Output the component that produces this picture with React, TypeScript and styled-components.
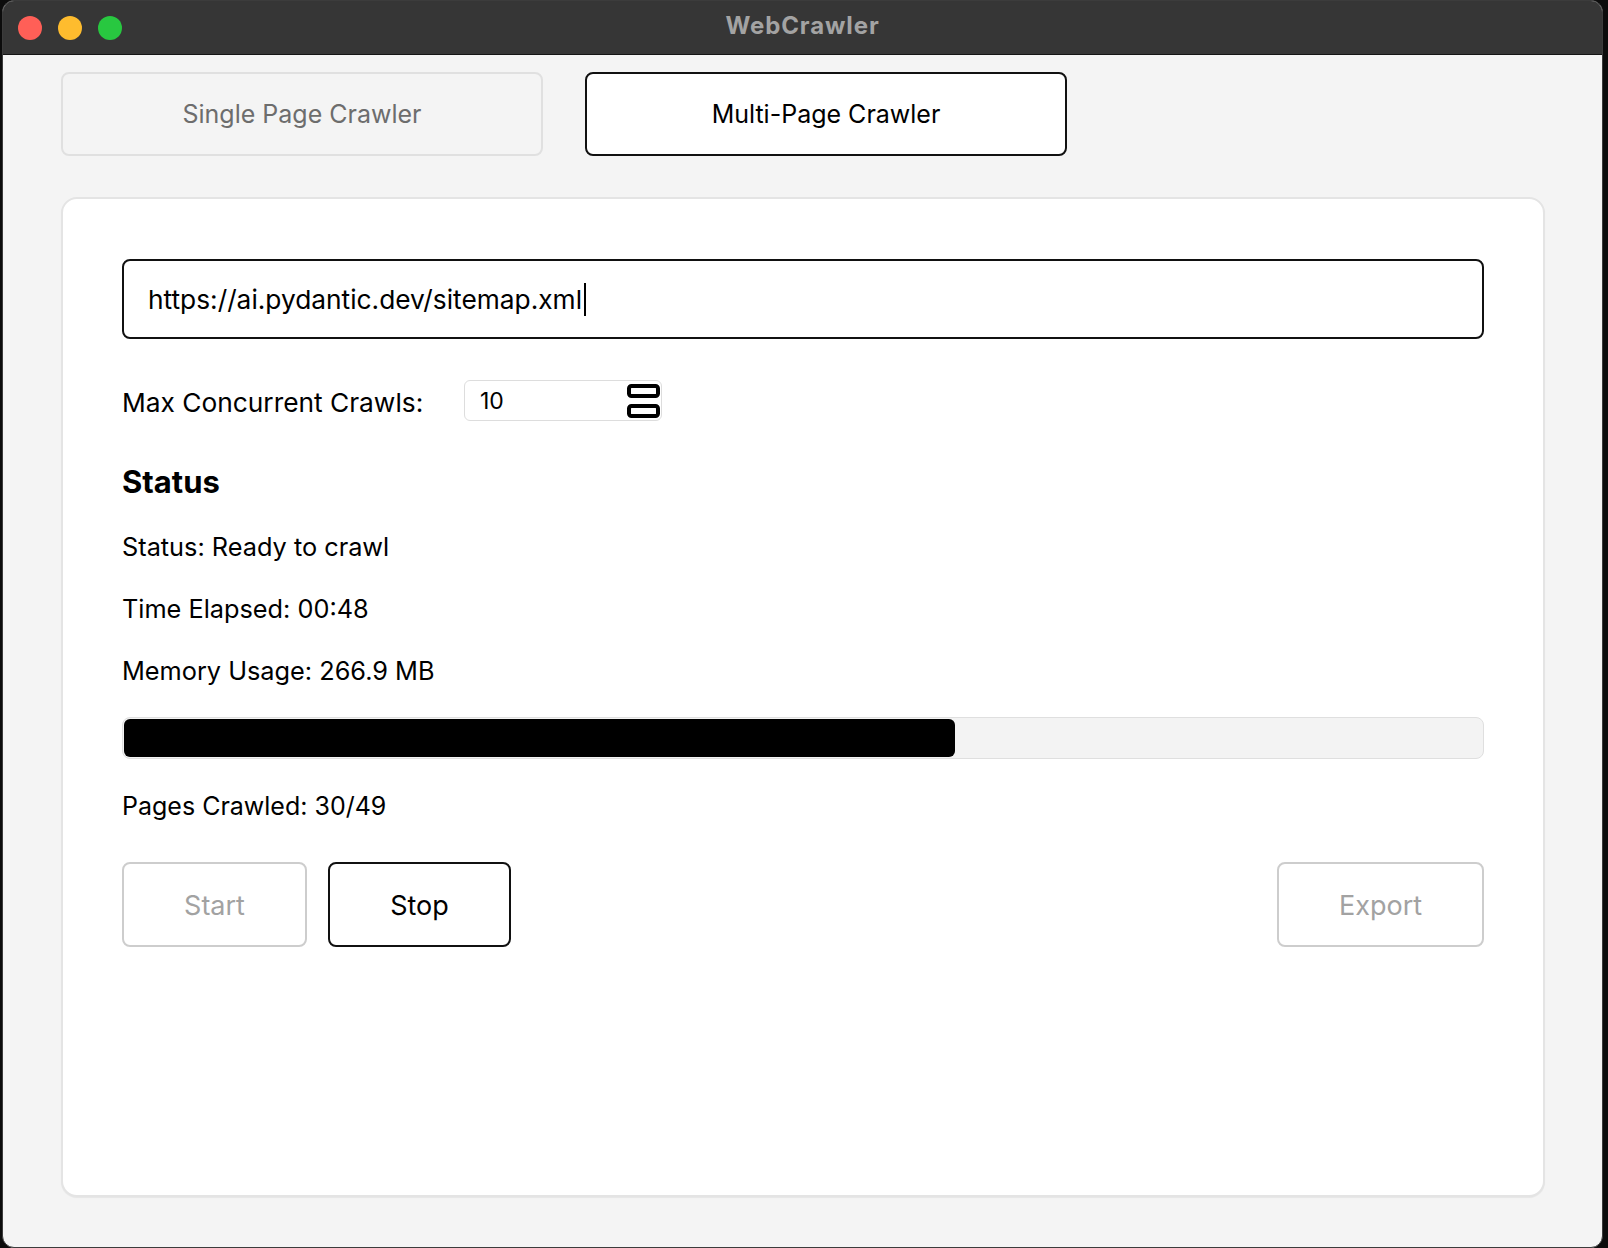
import styled, { createGlobalStyle } from 'styled-components';

const GlobalStyle = createGlobalStyle`
  html, body {
    margin: 0;
    padding: 0;
    background: #0c0c0c;
  }
  body {
    font-family: Inter, "Noto Sans", "Liberation Sans", sans-serif;
    color: #000;
  }
`;

const Window = styled.div`
  margin-left: 2px;
  width: 1601px;
  height: 1248px;
  box-sizing: border-box;
  background: #f4f4f4;
  border-radius: 12px;
  border: 1px solid #3c3c3c;
  overflow: hidden;
  display: flex;
  flex-direction: column;
`;

const TitleBar = styled.div`
  height: 53px;
  flex-shrink: 0;
  background: #363636;
  border-bottom: 1px solid #151515;
  display: grid;
  grid-template-columns: 1fr auto 1fr;
  align-items: center;
`;

const Lights = styled.div`
  display: flex;
  gap: 16px;
  padding-left: 15px;
`;

const Light = styled.span<{ $color: string }>`
  width: 24px;
  height: 24px;
  border-radius: 50%;
  background: ${(p) => p.$color};
`;

const Title = styled.div`
  font-size: 24px;
  font-weight: 700;
  color: #a3a3a3;
  letter-spacing: 0.9px;
  padding-bottom: 4px;
`;

const Content = styled.div`
  padding: 17px 0 0 58px;
  display: flex;
  flex-direction: column;
  gap: 41px;
`;

const Tabs = styled.div`
  display: flex;
  gap: 42px;
`;

const Tab = styled.div<{ $active?: boolean }>`
  width: 482px;
  height: 84px;
  box-sizing: border-box;
  border-radius: 8px;
  border: 2px solid ${(p) => (p.$active ? '#111' : '#e0e0e0')};
  background: ${(p) => (p.$active ? '#fff' : '#f4f4f4')};
  color: ${(p) => (p.$active ? '#000' : '#6d6d6d')};
  font-size: 25px;
  display: flex;
  align-items: center;
  justify-content: center;
`;

const Panel = styled.div`
  width: 1484px;
  height: 1000px;
  box-sizing: border-box;
  background: #fff;
  border: 2px solid #e4e4e4;
  border-radius: 16px;
  box-shadow: 0 1px 1px rgba(0, 0, 0, 0.06);
  padding: 60px 59px;
  display: flex;
  flex-direction: column;
`;

const UrlField = styled.div`
  height: 80px;
  box-sizing: border-box;
  border: 2px solid #111;
  border-radius: 8px;
  padding-left: 24px;
  display: flex;
  align-items: center;
  font-size: 26.3px;
`;

const Caret = styled.span`
  display: inline-block;
  width: 2px;
  height: 33px;
  background: #000;
  margin-left: 2px;
`;

const SpinRow = styled.div`
  margin-top: 41px;
  display: flex;
  align-items: center;
`;

const Label = styled.span`
  width: 342px;
  font-size: 26.3px;
  padding-top: 3px;
`;

const SpinBox = styled.div`
  width: 198px;
  height: 41px;
  box-sizing: border-box;
  border: 1.5px solid #dddddd;
  border-radius: 6px;
  display: flex;
  align-items: center;
  justify-content: space-between;
  padding: 0 1px 0 15px;
  font-size: 23px;
`;

const Heading = styled.div`
  margin-top: 41px;
  line-height: 40px;
  font-size: 31px;
  font-weight: 700;
`;

const InfoList = styled.div`
  margin-top: 25px;
  display: flex;
  flex-direction: column;
  gap: 22px;
`;

const Line = styled.div`
  line-height: 40px;
  font-size: 25.3px;
`;

const Track = styled.div`
  margin-top: 26px;
  height: 42px;
  box-sizing: border-box;
  border: 1.5px solid #dfdfdf;
  border-radius: 8px;
  background: #f3f3f3;
  padding: 1px;
`;

const Fill = styled.div`
  height: 100%;
  background: #000;
  border-radius: 6px;
`;

const Pages = styled(Line)`
  margin-top: 27px;
  font-size: 25px;
`;

const Buttons = styled.div`
  margin-top: 36px;
  display: flex;
  gap: 21px;
`;

const Button = styled.div<{ $enabled?: boolean; $width: number }>`
  width: ${(p) => p.$width}px;
  height: 85px;
  box-sizing: border-box;
  border-radius: 8px;
  border: 2px solid ${(p) => (p.$enabled ? '#111' : '#cdcdcd')};
  background: #fff;
  color: ${(p) => (p.$enabled ? '#000' : '#a2a2a2')};
  font-size: 27px;
  display: flex;
  align-items: center;
  justify-content: center;
  padding-top: 2px;
`;

const Spacer = styled.div`
  flex: 1;
`;

const SpinArrows = () => (
  <svg width="33" height="34" viewBox="0 0 33 34">
    <rect x="2" y="2" width="29" height="10" rx="2.5" fill="none" stroke="#000" strokeWidth="4" />
    <rect x="2" y="22" width="29" height="10" rx="2.5" fill="none" stroke="#000" strokeWidth="4" />
  </svg>
);

export default function App() {
  const crawled = 30;
  const total = 49;
  return (
    <>
      <GlobalStyle />
      <Window>
        <TitleBar>
          <Lights>
            <Light $color="#ff5f57" />
            <Light $color="#febc2e" />
            <Light $color="#28c840" />
          </Lights>
          <Title>WebCrawler</Title>
          <div />
        </TitleBar>
        <Content>
          <Tabs>
            <Tab>Single Page Crawler</Tab>
            <Tab $active>Multi-Page Crawler</Tab>
          </Tabs>
          <Panel>
            <UrlField>
              https://ai.pydantic.dev/sitemap.xml
              <Caret />
            </UrlField>
            <SpinRow>
              <Label>Max Concurrent Crawls:</Label>
              <SpinBox>
                <span>10</span>
                <SpinArrows />
              </SpinBox>
            </SpinRow>
            <Heading>Status</Heading>
            <InfoList>
              <Line>Status: Ready to crawl</Line>
              <Line>Time Elapsed: 00:48</Line>
              <Line>Memory Usage: 266.9 MB</Line>
            </InfoList>
            <Track>
              <Fill style={{ width: `${(crawled / total) * 100}%` }} />
            </Track>
            <Pages>
              Pages Crawled: {crawled}/{total}
            </Pages>
            <Buttons>
              <Button $width={185}>Start</Button>
              <Button $width={183} $enabled>
                Stop
              </Button>
              <Spacer />
              <Button $width={207}>Export</Button>
            </Buttons>
          </Panel>
        </Content>
      </Window>
    </>
  );
}
